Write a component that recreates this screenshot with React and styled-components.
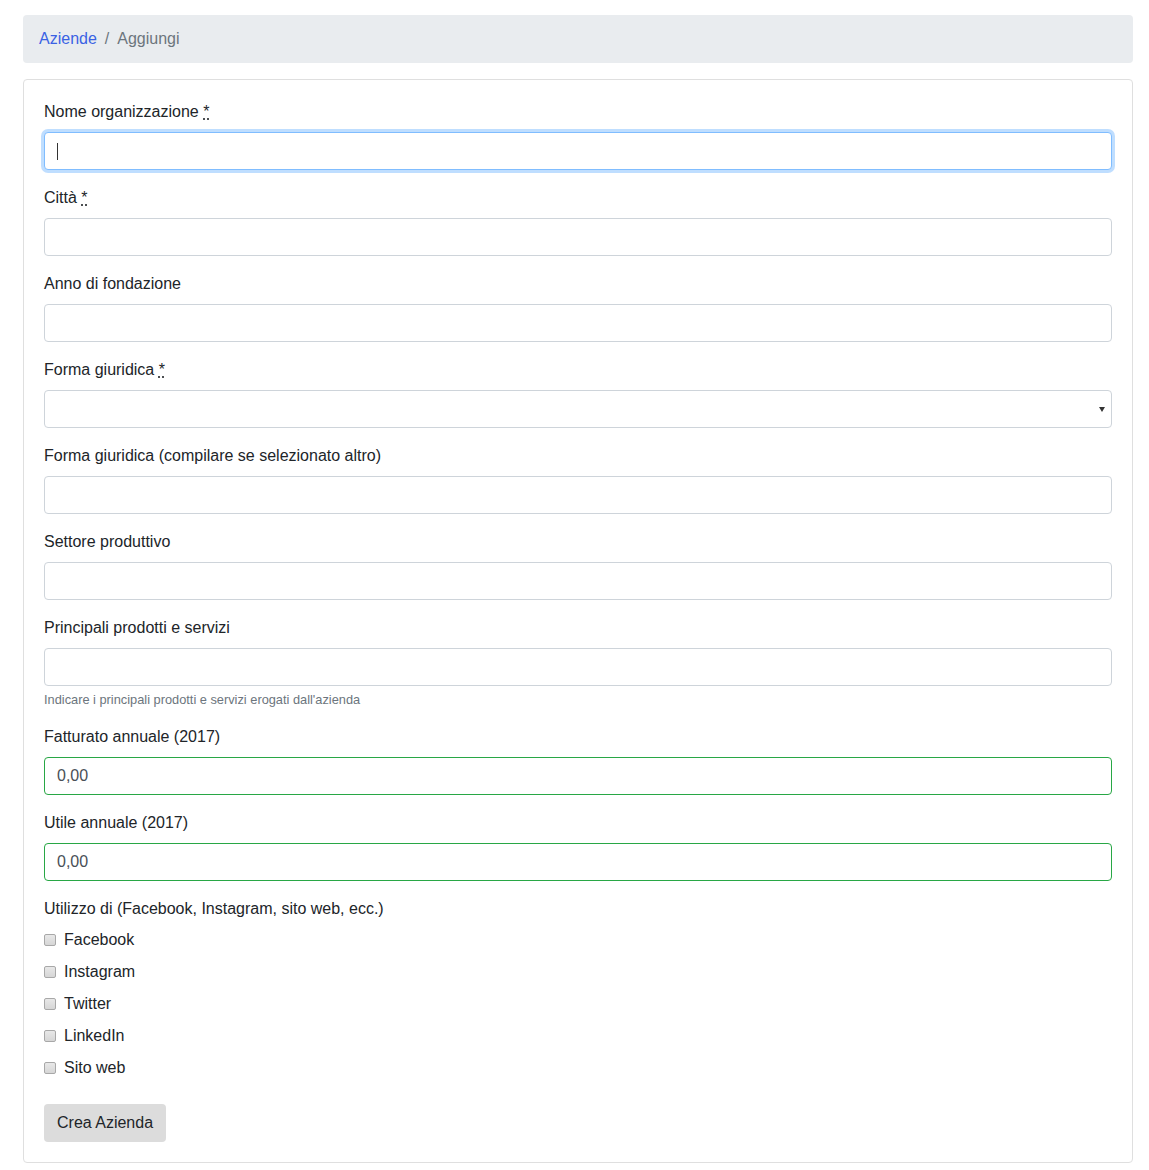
import React from "react";
import styled, { createGlobalStyle, css } from "styled-components";

const Global = createGlobalStyle`
  html, body { margin: 0; padding: 0; background: #fff; }
  body {
    font-family: "Liberation Sans", Arial, Helvetica, sans-serif;
    font-size: 16px;
    line-height: 1.5;
    color: #212529;
  }
  * { box-sizing: border-box; }
`;

const Page = styled.div`
  padding: 15px 16px 8px 23px;
`;

const Breadcrumb = styled.nav`
  display: flex;
  align-items: center;
  background: #e9ecef;
  border-radius: 4px;
  padding: 12px 16px;
  margin-bottom: 16px;
  height: 48px;
`;

const Crumb = styled.a`
  color: #3a62e4;
  text-decoration: none;
`;

const Separator = styled.span`
  color: #6c757d;
  padding: 0 8px;
`;

const Active = styled.span`
  color: #6c757d;
`;

const Card = styled.div`
  border: 1px solid #dfdfdf;
  border-radius: 4px;
  padding: 20px;
`;

const Group = styled.div`
  margin-bottom: 16px;
`;

const Label = styled.label`
  display: block;
  margin-bottom: ${(p) => (p.$tight ? "7px" : "8px")};
  line-height: 24px;
`;

const Req = styled.abbr`
  text-decoration: underline dotted;
  text-underline-offset: 2px;
  cursor: help;
`;

const inputBase = css`
  display: block;
  width: 100%;
  height: 38px;
  padding: 6px 12px;
  font-family: inherit;
  font-size: 16px;
  line-height: 1.5;
  color: #495057;
  background: #fff;
  border: 1px solid #ced4da;
  border-radius: 4px;
  outline: none;
`;

const Input = styled.input`
  ${inputBase}
  ${(p) =>
    p.$focus &&
    css`
      border-color: #80bdff;
      box-shadow: 0 0 0 3px rgba(0, 123, 255, 0.25);
    `}
  ${(p) =>
    p.$valid &&
    css`
      border-color: #28a745;
    `}
  &:focus {
    border-color: #80bdff;
    box-shadow: 0 0 0 3px rgba(0, 123, 255, 0.25);
  }
`;

const FocusWrap = styled.div`
  position: relative;
`;

const Caret = styled.span`
  position: absolute;
  left: 13px;
  top: 11px;
  width: 1px;
  height: 17px;
  background: #333;
  pointer-events: none;
`;

const SelectWrap = styled.div`
  position: relative;
  &::after {
    content: "";
    position: absolute;
    right: 7px;
    top: 17px;
    width: 0;
    height: 0;
    border-left: 3px solid transparent;
    border-right: 3px solid transparent;
    border-top: 5px solid #333;
    pointer-events: none;
  }
`;

const Select = styled.select`
  ${inputBase}
  appearance: none;
  -webkit-appearance: none;
`;

const Help = styled.small`
  display: block;
  margin-top: 4px;
  font-size: 12.8px;
  line-height: 19.2px;
  color: #6c757d;
`;

const CheckList = styled.div`
  display: flex;
  flex-direction: column;
  gap: 8px;
  padding-bottom: 8px;
`;

const CheckRow = styled.label`
  display: flex;
  align-items: center;
  height: 24px;
`;

const Check = styled.input`
  appearance: none;
  -webkit-appearance: none;
  width: 12px;
  height: 12px;
  margin: 0 8px 0 0;
  border: 1px solid #a8a8a8;
  border-radius: 2px;
  background: linear-gradient(#e8e8e8, #d6d6d6);
`;

const Button = styled.button`
  display: inline-block;
  font-family: inherit;
  font-size: 16px;
  line-height: 1.5;
  color: #212529;
  background: #dcdcdc;
  border: 1px solid transparent;
  border-radius: 4px;
  padding: 6px 12px;
  cursor: pointer;
`;

const fields = [
  { label: "Città", req: true },
  { label: "Anno di fondazione" },
];

const socials = ["Facebook", "Instagram", "Twitter", "LinkedIn", "Sito web"];

function Asterisk() {
  return (
    <>
      {" "}
      <Req title="required">*</Req>
    </>
  );
}

export default function App() {
  return (
    <Page>
      <Global />
      <Breadcrumb>
        <Crumb href="#">Aziende</Crumb>
        <Separator>/</Separator>
        <Active>Aggiungi</Active>
      </Breadcrumb>
      <Card>
        <Group>
          <Label>
            Nome organizzazione
            <Asterisk />
          </Label>
          <FocusWrap>
            <Input type="text" $focus />
            <Caret />
          </FocusWrap>
        </Group>
        {fields.map((f) => (
          <Group key={f.label}>
            <Label>
              {f.label}
              {f.req && <Asterisk />}
            </Label>
            <Input type="text" />
          </Group>
        ))}
        <Group>
          <Label>
            Forma giuridica
            <Asterisk />
          </Label>
          <SelectWrap>
            <Select defaultValue="">
              <option value=""></option>
            </Select>
          </SelectWrap>
        </Group>
        <Group>
          <Label>Forma giuridica (compilare se selezionato altro)</Label>
          <Input type="text" />
        </Group>
        <Group>
          <Label>Settore produttivo</Label>
          <Input type="text" />
        </Group>
        <Group>
          <Label>Principali prodotti e servizi</Label>
          <Input type="text" />
          <Help>Indicare i principali prodotti e servizi erogati dall'azienda</Help>
        </Group>
        <Group>
          <Label>Fatturato annuale (2017)</Label>
          <Input type="text" $valid defaultValue="0,00" />
        </Group>
        <Group>
          <Label>Utile annuale (2017)</Label>
          <Input type="text" $valid defaultValue="0,00" />
        </Group>
        <Group>
          <Label $tight>Utilizzo di (Facebook, Instagram, sito web, ecc.)</Label>
          <CheckList>
            {socials.map((s) => (
              <CheckRow key={s}>
                <Check type="checkbox" />
                {s}
              </CheckRow>
            ))}
          </CheckList>
        </Group>
        <Button type="submit">Crea Azienda</Button>
      </Card>
    </Page>
  );
}
